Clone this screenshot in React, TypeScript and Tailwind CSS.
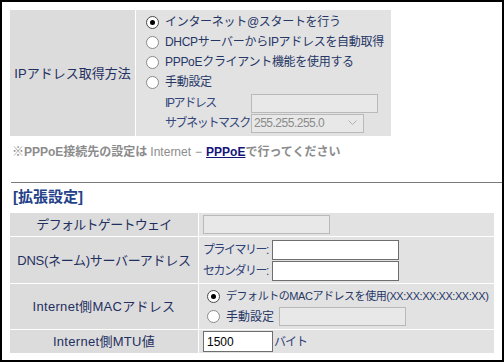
import React from "react";

const FONT = { fontFamily: '"Liberation Sans", "Noto Sans CJK JP", sans-serif' };

function Radio({ checked }: { checked?: boolean }) {
  return (
    <span
      className={
        "inline-flex w-[13px] h-[13px] shrink-0 rounded-full bg-white items-center justify-center border " +
        (checked ? "border-[#4a4a4a]" : "border-[#8a8a8a]")
      }
    >
      {checked ? <span className="block w-[5px] h-[5px] rounded-full bg-black" /> : null}
    </span>
  );
}

function RadioRow({ checked, children, tight }: { checked?: boolean; children: React.ReactNode; tight?: boolean }) {
  return (
    <div className="h-[20px] flex items-center gap-[6px]">
      <Radio checked={checked} />
      <span
        className={
          "whitespace-nowrap leading-none text-[#263766] " +
          (tight ? "text-[11px] tracking-[-0.45px]" : "text-[12px] tracking-[-0.3px]")
        }
      >
        {children}
      </span>
    </div>
  );
}

function DisabledInput({ w }: { w: string }) {
  return <div className={"h-[19px] shrink-0 border border-[#b9b9b9] bg-[#e8e8e8] " + w} />;
}

export default function App() {
  return (
    <div style={FONT} className="w-[504px] h-[362px] border-2 border-black bg-white overflow-hidden pl-[8px] pt-[8px]">
      {/* top table */}
      <div className="flex w-[381px] h-[126px] gap-px">
        <div className="w-[125px] bg-[#dcdcdc] flex items-center justify-center">
          <span className="whitespace-nowrap text-[13px] leading-none text-[#1f2f60]">IPアドレス取得方法</span>
        </div>
        <div className="flex-1 bg-[#e2e2e2] pt-[2px] pl-[10px]">
          <RadioRow checked>インターネット@スタートを行う</RadioRow>
          <RadioRow>DHCPサーバーからIPアドレスを自動取得</RadioRow>
          <RadioRow>PPPoEクライアント機能を使用する</RadioRow>
          <RadioRow>手動設定</RadioRow>
          <div className="flex items-center h-[20px] mt-px pl-[19px]">
            <span className="w-[86px] whitespace-nowrap text-[12px] tracking-[-1.4px] leading-none text-[#34467a]">IPアドレス</span>
            <DisabledInput w="w-[127px]" />
          </div>
          <div className="flex items-center h-[20px] pl-[19px]">
            <span className="w-[86px] whitespace-nowrap text-[12px] tracking-[-1.4px] leading-none text-[#34467a]">サブネットマスク</span>
            <div className="w-[113px] h-[19px] shrink-0 border border-[#b9b9b9] bg-[#e8e8e8] flex items-center justify-between pl-[2px] pr-[6px]">
              <span className="whitespace-nowrap text-[12px] tracking-[-0.5px] leading-none text-[#8a8a8a]">255.255.255.0</span>
              <svg width="9" height="6" viewBox="0 0 9 6">
                <path d="M0.5 0.5 L4.5 4.5 L8.5 0.5" fill="none" stroke="#b0b0b0" strokeWidth="1" />
              </svg>
            </div>
          </div>
        </div>
      </div>

      {/* note */}
      <div className="mt-[8px] ml-[2px] h-[16px] flex items-center whitespace-nowrap text-[12px] leading-none font-bold text-[#8c8c8c]">
        <span>※PPPoE接続先の設定は</span>
        <span className="font-normal ml-[3px]">Internet</span>
        <span className="font-normal mx-[4px]">−</span>
        <a className="text-[#14147a] underline">PPPoE</a>
        <span>で行ってください</span>
      </div>

      {/* hr */}
      <div className="mt-[22px] ml-px h-px bg-[#7a7a7a]" />

      {/* section heading */}
      <div className="ml-[3px] mt-[3px] h-[20px] flex items-center whitespace-nowrap text-[15px] leading-none font-bold text-[#24418a]">
        [拡張設定]
      </div>

      {/* lower table */}
      <div className="mt-[7px] w-[484px] grid grid-cols-[188px_1fr] grid-rows-[23px_46px_45px_23px] gap-px text-[#1f2f60]">
        <div className="bg-[#dcdcdc] flex items-center justify-center whitespace-nowrap text-[13px] tracking-[-0.7px] leading-none">デフォルトゲートウェイ</div>
        <div className="bg-[#e2e2e2] flex items-center pl-[4px]">
          <DisabledInput w="w-[127px]" />
        </div>

        <div className="bg-[#dcdcdc] flex items-center justify-center whitespace-nowrap text-[13px] tracking-[-0.3px] leading-none">DNS(ネーム)サーバーアドレス</div>
        <div className="bg-[#e2e2e2] flex flex-col pl-[4px] pt-[3px] gap-px">
          <div className="flex items-center h-[20px]">
            <span className="w-[69px] whitespace-nowrap text-[12px] tracking-[-1.5px] leading-none text-[#2e4178]">プライマリー:</span>
            <div className="w-[127px] h-[20px] shrink-0 bg-white border border-[#6e6e6e]" />
          </div>
          <div className="flex items-center h-[20px]">
            <span className="w-[69px] whitespace-nowrap text-[12px] tracking-[-1.5px] leading-none text-[#2e4178]">セカンダリー:</span>
            <div className="w-[127px] h-[20px] shrink-0 bg-white border border-[#6e6e6e]" />
          </div>
        </div>

        <div className="bg-[#dcdcdc] flex items-center justify-center whitespace-nowrap text-[13px] tracking-[0.3px] leading-none">Internet側MACアドレス</div>
        <div className="bg-[#e2e2e2] flex flex-col justify-center pl-[8px]">
          <RadioRow checked tight>デフォルトのMACアドレスを使用(XX:XX:XX:XX:XX:XX)</RadioRow>
          <div className="h-[20px] flex items-center gap-[6px]">
            <Radio />
            <span className="whitespace-nowrap text-[12px] leading-none text-[#263766]">手動設定</span>
            <DisabledInput w="w-[127px] ml-[-1px]" />
          </div>
        </div>

        <div className="bg-[#dcdcdc] flex items-center justify-center whitespace-nowrap text-[13px] tracking-[0.3px] leading-none">Internet側MTU値</div>
        <div className="bg-[#e2e2e2] flex items-center pl-[4px]">
          <div className="w-[70px] h-[21px] shrink-0 bg-white border border-[#6e6e6e] flex items-center pl-[3px] text-[12px] leading-none text-black">1500</div>
          <span className="ml-[1px] whitespace-nowrap text-[12px] tracking-[-1px] leading-none text-[#2e4178]">バイト</span>
        </div>
      </div>
    </div>
  );
}
